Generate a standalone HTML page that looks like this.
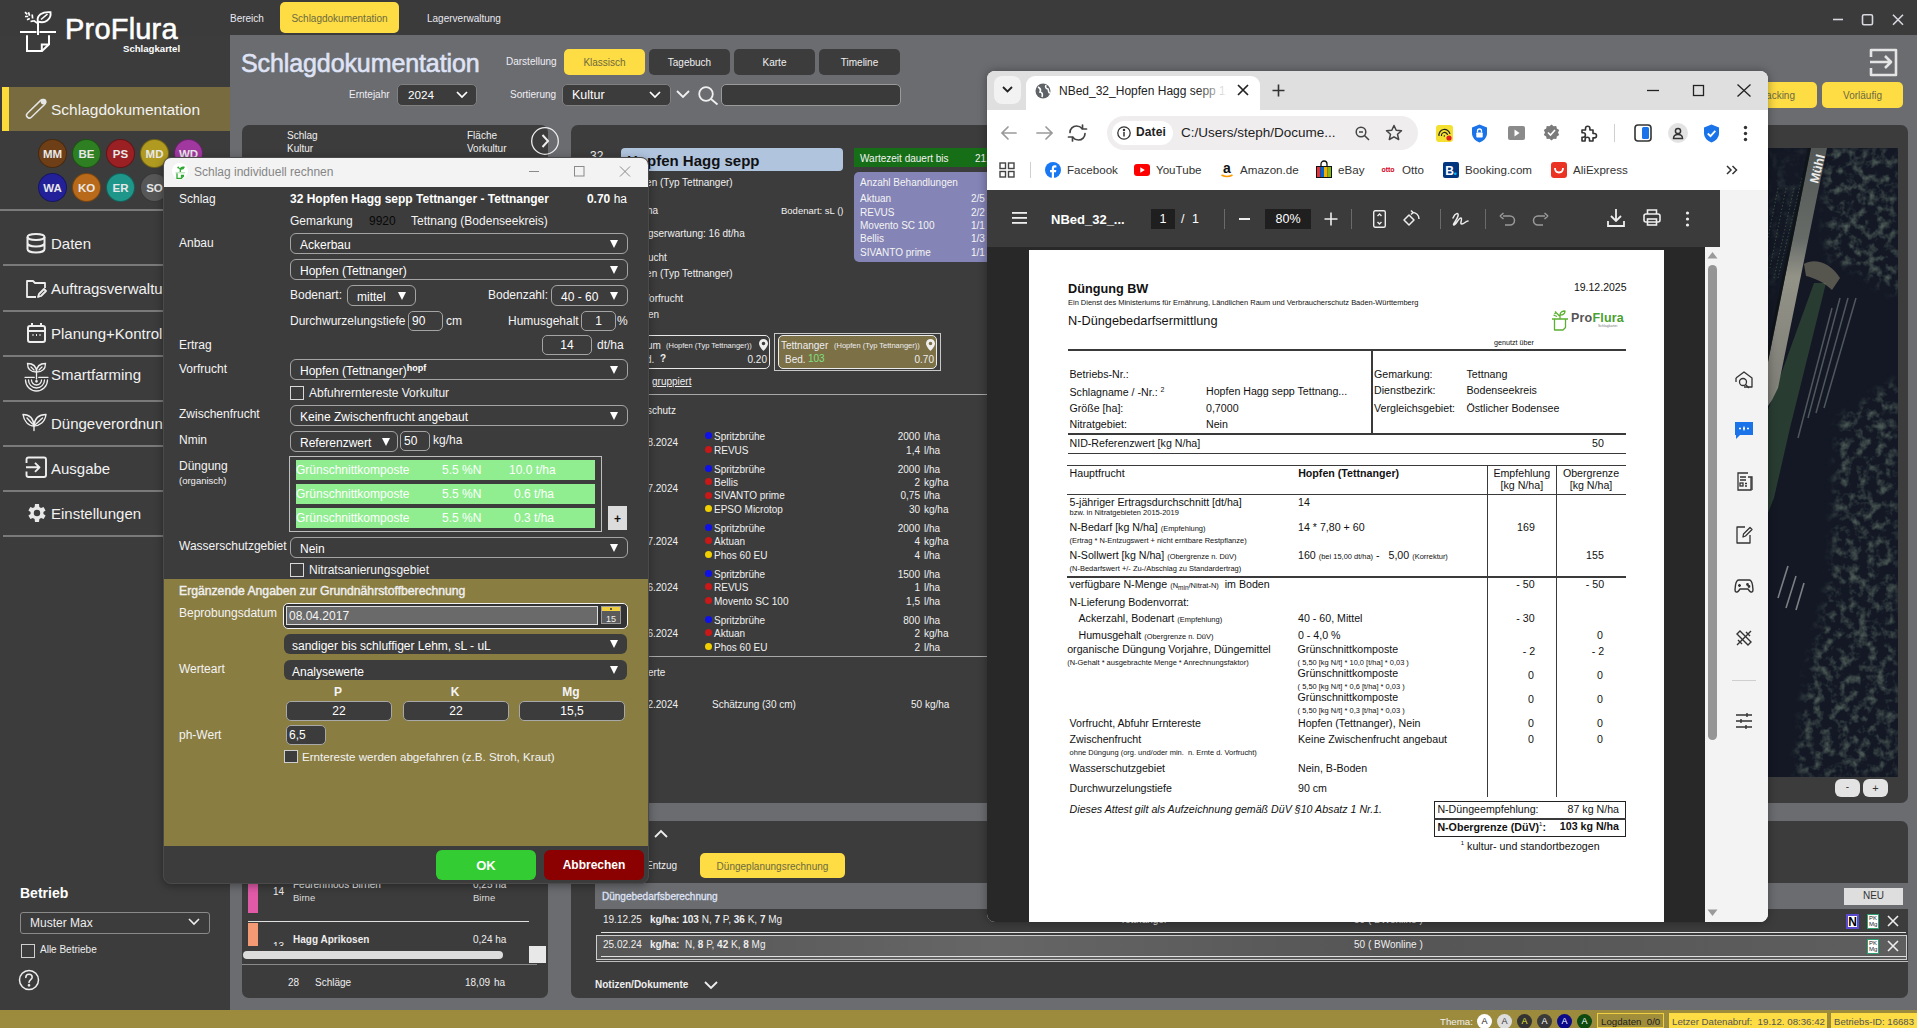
<!DOCTYPE html>
<html><head><meta charset="utf-8">
<style>
*{box-sizing:border-box;margin:0;padding:0}
html,body{width:1917px;height:1028px;overflow:hidden;background:#3c3c3c;font-family:"Liberation Sans",sans-serif;color:#fff}
.a{position:absolute}
.t{position:absolute;white-space:nowrap;line-height:1}
.b{font-weight:bold}
.r{text-align:right}
.c{text-align:center}
svg{position:absolute;overflow:visible}
.sep{position:absolute;left:3px;width:227px;height:1.5px;background:#7a7a7a}
.av{position:absolute;width:29px;height:29px;border-radius:50%;font-size:11.5px;font-weight:bold;line-height:29px;text-align:center;color:#e8e8e8;border:1px solid rgba(0,0,0,.35)}
.mi{position:absolute;left:51px;font-size:15px;line-height:1;white-space:nowrap;color:#f2f2f2}
.btn{position:absolute;border-radius:5px;font-size:10px;line-height:26px;text-align:center;color:#f0f0f0;background:#3c3c3c}
.yb{background:#fddc44;color:#6d6a40}
.dd{position:absolute;border:1px solid #a4a4a4;border-radius:6px;height:21px;font-size:12px;line-height:19px;padding-left:9px;padding-top:1.5px;color:#fff;white-space:nowrap}
.dd i{position:absolute;right:9px;top:5.5px;width:0;height:0;border-left:4.5px solid transparent;border-right:4.5px solid transparent;border-top:8px solid #fff}
.in{position:absolute;border:1px solid #a4a4a4;border-radius:5px;height:20px;font-size:12px;line-height:18px;color:#fff;white-space:nowrap}
.cb{position:absolute;width:14px;height:14px;border:1px solid #d8d8d8}
.lbl{position:absolute;left:14px;font-size:12px;line-height:1;white-space:nowrap;color:#f4f4f4}
.pt{position:absolute;white-space:nowrap;line-height:1;color:#111;font-size:10.6px}
.ps{position:absolute;white-space:nowrap;line-height:1;color:#111;font-size:7.4px}
.pl{position:absolute;background:#3a3a3a}
</style></head><body>
<!-- ===== APP BACKGROUND ===== -->
<div class="a" style="left:0;top:0;width:1917px;height:36px;background:#3b3b3b"></div>
<div class="a" style="left:0;top:36px;width:230px;height:974px;background:#3c3c3c"></div>
<div class="a" style="left:230px;top:35px;width:1687px;height:975px;background:#6b6c70"></div>
<div class="a" style="left:0;top:1010px;width:1917px;height:18px;background:#9c8b3d"></div>

<!-- ===== TOP BAR ===== -->
<svg style="left:0;top:0" width="60" height="60" viewBox="0 0 60 60" fill="none" stroke="#fff" stroke-width="2" stroke-linecap="butt" stroke-linejoin="miter">
  <path d="M20 32H36.5M39.5 32H56"/>
  <path d="M27 35.2V51H42L49 44.3V35.2"/>
  <path d="M41.8 51V44.6H49"/>
  <path d="M38 35V22"/>
  <path d="M37.8 21.5C36.5 15.5 42 11.5 50.5 12.2C51.5 19.5 45 24 37.8 21.5Z" stroke-width="1.9"/>
  <path d="M41 19.5L47.5 14" stroke-width="1.6"/>
  <path d="M25 12.2L27.3 14.3M25 16.5H28.2M27 19.8L29.8 18.5M28.5 12.2L29.6 15.8M32.2 14.5L32.6 18.5M30.5 21.5L33.5 20.8M33.5 20.5L38 23.5" stroke-width="1.7"/>
</svg>
<div class="t" style="left:65px;top:15px;font-size:29px;letter-spacing:0.2px;-webkit-text-stroke:0.55px #fff">ProFlura</div>
<div class="t b" style="left:123px;top:44px;font-size:9.6px">Schlagkartel</div>

<div class="t" style="left:230px;top:14px;font-size:10px;color:#e8e8f0">Bereich</div>
<div class="btn yb" style="left:280px;top:2px;width:119px;height:31px;line-height:33px;border-radius:5px">Schlagdokumentation</div>
<div class="t" style="left:427px;top:14px;font-size:10px;color:#e8e8f0">Lagerverwaltung</div>

<svg style="left:1833px;top:14px" width="80" height="14" fill="none" stroke="#d8d8e0" stroke-width="1.6">
  <path d="M0 5.5H10"/>
  <rect x="29.5" y="0.8" width="10" height="10" rx="1.5"/>
  <path d="M60 0.8L70 10.8M70 0.8L60 10.8"/>
</svg>

<!-- ===== SIDEBAR ===== -->
<div class="a" style="left:2px;top:87px;width:228px;height:44px;background:#776b3f"></div>
<div class="a" style="left:2px;top:87px;width:7px;height:44px;background:#fadb3b"></div>
<svg style="left:22px;top:94px" width="28" height="28" fill="none" stroke="#e6e6e6" stroke-width="1.5">
  <rect x="2" y="12" width="24" height="5.6" rx="2.8" transform="rotate(-44 14 14.8)"/>
  <circle cx="21.6" cy="7.6" r="2.9" fill="#e6e6e6" stroke="none"/>
</svg>
<div class="mi" style="left:51px;top:102px;font-size:15.5px">Schlagdokumentation</div>

<div class="av" style="left:38px;top:139px;background:#6e3f17">MM</div>
<div class="av" style="left:72px;top:139px;background:#2e7f22">BE</div>
<div class="av" style="left:106px;top:139px;background:#9a2024">PS</div>
<div class="av" style="left:140px;top:139px;background:#b09a20">MD</div>
<div class="av" style="left:174px;top:139px;background:#a038a0">WD</div>
<div class="av" style="left:38px;top:173px;background:#23219a">WA</div>
<div class="av" style="left:72px;top:173px;background:#b86a1a">KO</div>
<div class="av" style="left:106px;top:173px;background:#1f968a">ER</div>
<div class="av" style="left:140px;top:173px;background:#575757">SO</div>

<div class="sep" style="left:0;top:209px;width:230px"></div>
<!-- menu -->
<svg style="left:26px;top:233px" width="20" height="20" fill="none" stroke="#eee" stroke-width="2">
  <ellipse cx="10" cy="4" rx="8.5" ry="3"/><path d="M1.5 4V16C1.5 18 5 19.5 10 19.5S18.5 18 18.5 16V4M1.5 10C1.5 12 5 13.5 10 13.5S18.5 12 18.5 10"/>
</svg>
<div class="mi" style="top:236px">Daten</div>
<div class="sep" style="top:264px"></div>
<svg style="left:25px;top:279px" width="22" height="20" fill="none" stroke="#eee" stroke-width="1.8" stroke-linejoin="round">
  <path d="M11 18H2V2H8L10 4H20V9"/><path d="M13 18L14 15L19 10L21 12L16 17Z"/>
</svg>
<div class="mi" style="top:281px">Auftragsverwaltu</div>
<div class="sep" style="top:310px"></div>
<svg style="left:27px;top:323px" width="20" height="20" fill="none" stroke="#eee" stroke-width="2">
  <rect x="1" y="3" width="17" height="16" rx="2"/><path d="M5 0V4M14 0V4M1 8H18"/><path d="M5.5 12H6.5M9 12H10M12.5 12H13.5"/>
</svg>
<div class="mi" style="top:326px">Planung+Kontrol</div>
<div class="sep" style="top:355px"></div>
<svg style="left:24px;top:362px" width="26" height="31" fill="none" stroke="#eee" stroke-width="1.3" stroke-linecap="round">
  <path d="M12.5 10C6.5 10 3.5 6.5 3.5 1.5C9 1.5 12.5 4.5 12.5 10ZM12.5 10C18.5 10 21.5 6.5 21.5 1.5C16 1.5 12.5 4.5 12.5 10Z"/><path d="M7 5L10 8M18 5L15 8"/>
  <path d="M12.5 10V17M1 15.3H10.3M14.7 15.3H24"/>
  <path d="M1.5 18A11 11 0 0 0 23.5 18M4.5 18A8 8 0 0 0 20.5 18M7.5 18A5 5 0 0 0 17.5 18"/><circle cx="12.5" cy="19.3" r=".7" fill="#eee"/>
</svg>
<div class="mi" style="top:367px">Smartfarming</div>
<div class="sep" style="top:400px"></div>
<svg style="left:22px;top:413px" width="26" height="19" fill="none" stroke="#eee" stroke-width="1.4" stroke-linejoin="round" stroke-linecap="round">
  <path d="M12 13C6.5 13 2 8.5 1 1.5C7.5 1.5 11.5 5.5 12 13Z"/><path d="M5 5L10.5 11"/>
  <path d="M12 13C17.5 13 23 9 24 1.5C16.5 1.5 12.5 6 12 13Z"/><path d="M20.5 5L13.5 11.5"/>
  <path d="M12 13V17.5"/>
</svg>
<div class="mi" style="top:416px">Düngeverordnun</div>
<div class="sep" style="top:445px"></div>
<svg style="left:25px;top:456px" width="23" height="23" fill="none" stroke="#eee" stroke-width="1.9" stroke-linejoin="round">
  <path d="M1.5 7V3.5Q1.5 1.5 3.5 1.5H19Q21 1.5 21 3.5V19Q21 21 19 21H3.5Q1.5 21 1.5 19V15.5"/><path d="M1 11.3H14.5M10 6.8L14.5 11.3L10 15.8"/>
</svg>
<div class="mi" style="top:461px">Ausgabe</div>
<div class="sep" style="top:490px"></div>
<svg style="left:24.5px;top:500.5px" width="24" height="24" viewBox="0 0 24 24" fill="#e8e8e8">
  <path d="M19.4 13a7.8 7.8 0 0 0 0-2l2.1-1.6-2-3.5-2.5 1a7.6 7.6 0 0 0-1.7-1L15 3h-4l-.4 2.9a7.6 7.6 0 0 0-1.7 1l-2.5-1-2 3.5L6.6 11a7.8 7.8 0 0 0 0 2l-2.2 1.6 2 3.5 2.5-1a7.6 7.6 0 0 0 1.7 1L11 21h4l.4-2.9a7.6 7.6 0 0 0 1.7-1l2.5 1 2-3.5zM13 15.2a3.2 3.2 0 1 1 0-6.4 3.2 3.2 0 0 1 0 6.4z" transform="translate(-1 0)"/>
</svg>
<div class="mi" style="top:506px">Einstellungen</div>
<div class="sep" style="top:535px"></div>

<div class="t b" style="left:20px;top:886px;font-size:14px">Betrieb</div>
<div class="a" style="left:20px;top:912px;width:190px;height:22px;border:1px solid #8a8a8a;border-radius:3px"></div>
<div class="t" style="left:30px;top:917px;font-size:12px;color:#eee">Muster Max</div>
<svg style="left:188px;top:918px" width="12" height="8" fill="none" stroke="#eee" stroke-width="1.6"><path d="M1 1L6 6L11 1"/></svg>
<div class="a" style="left:21px;top:944px;width:14px;height:14px;border:1px solid #cfcfcf"></div>
<div class="t" style="left:40px;top:945px;font-size:10px;color:#eee">Alle Betriebe</div>
<svg style="left:18px;top:969px" width="22" height="22" fill="none" stroke="#eee" stroke-width="1.5">
  <circle cx="11" cy="11" r="9.5"/><path d="M7.8 8.5C7.8 6.5 9.3 5.3 11 5.3C12.8 5.3 14.2 6.5 14.2 8.2C14.2 10.5 11 10.7 11 13.5" stroke-linecap="round"/><circle cx="11" cy="16.3" r="0.6" fill="#eee"/>
</svg>


<!-- ===== MAIN HEADER ===== -->
<div class="t" style="left:241px;top:51px;font-size:25px;color:#dfe3f6;letter-spacing:-0.1px;-webkit-text-stroke:0.6px #dfe3f6">Schlagdokumentation</div>
<div class="t" style="left:506px;top:57px;font-size:10px;color:#eeeef4">Darstellung</div>
<div class="btn yb" style="left:564px;top:49px;width:81px;height:26px;line-height:28px">Klassisch</div>
<div class="btn" style="left:649px;top:49px;width:81px;height:26px;line-height:28px">Tagebuch</div>
<div class="btn" style="left:734px;top:49px;width:81px;height:26px;line-height:28px">Karte</div>
<div class="btn" style="left:819px;top:49px;width:81px;height:26px;line-height:28px">Timeline</div>
<div class="t" style="left:349px;top:90px;font-size:10px;color:#eeeef4">Erntejahr</div>
<div class="a" style="left:397px;top:84px;width:80px;height:22px;background:#3c3c3c;border-radius:5px;border:1px solid #808080"></div>
<div class="t" style="left:408px;top:89px;font-size:11.7px;color:#fff">2024</div>
<svg style="left:456px;top:91px" width="12" height="8" fill="none" stroke="#fff" stroke-width="1.7"><path d="M1 1L6 6L11 1"/></svg>
<div class="t" style="left:510px;top:90px;font-size:10px;color:#eeeef4">Sortierung</div>
<div class="a" style="left:562px;top:84px;width:109px;height:22px;background:#3c3c3c;border-radius:5px;border:1px solid #808080"></div>
<div class="t" style="left:572px;top:89px;font-size:12.5px;color:#fff">Kultur</div>
<svg style="left:649px;top:91px" width="12" height="8" fill="none" stroke="#fff" stroke-width="1.7"><path d="M1 1L6 6L11 1"/></svg>
<svg style="left:676px;top:90px" width="14" height="9" fill="none" stroke="#f0f0f0" stroke-width="1.8"><path d="M1 1L7 7L13 1"/></svg>
<svg style="left:698px;top:86px" width="21" height="19" fill="none" stroke="#f0f0f0" stroke-width="1.8"><circle cx="8" cy="8" r="6.8"/><path d="M13 13L19.5 18.5"/></svg>
<div class="a" style="left:721px;top:84px;width:180px;height:22px;background:#3a3a3a;border-radius:5px;border:1px solid #9a9a9a"></div>

<svg style="left:1869px;top:48px" width="30" height="29" fill="none" stroke="#e4e4e4" stroke-width="2.6" stroke-linejoin="round">
  <path d="M2 9V2H27V27H2V20"/><path d="M1 14H22M16 8L22 14L16 20"/>
</svg>
<div class="btn yb" style="left:1735px;top:82px;width:82px;height:26px;line-height:28px">Tracking</div>
<div class="btn yb" style="left:1822px;top:82px;width:81px;height:26px;line-height:28px">Vorläufig</div>

<!-- ===== CARDS ===== -->
<div class="a" style="left:242px;top:125px;width:306px;height:873px;background:#3c3c3c;border-radius:7px"></div>
<div class="a" style="left:571px;top:125px;width:1337px;height:678px;background:#3c3c3c;border-radius:7px"></div>
<div class="a" style="left:571px;top:821px;width:1337px;height:177px;background:#3c3c3c;border-radius:7px"></div>

<!-- left card content -->
<div class="t" style="left:287px;top:131px;font-size:10px;color:#f0f0f0">Schlag</div>
<div class="t" style="left:287px;top:144px;font-size:10px;color:#f0f0f0">Kultur</div>
<div class="t" style="left:467px;top:131px;font-size:10px;color:#f0f0f0">Fläche</div>
<div class="t" style="left:467px;top:144px;font-size:10px;color:#f0f0f0">Vorkultur</div>
<svg style="left:531px;top:127px" width="28" height="28" fill="none" stroke="#eee" stroke-width="1.3"><circle cx="14" cy="14" r="13.3"/><path d="M11.5 8L17 14L11.5 20" stroke-width="2"/></svg>

<div class="a" style="left:248px;top:880px;width:10px;height:33px;background:#e05aa8"></div>
<div class="t" style="left:273px;top:887px;font-size:10px;color:#eee">14</div>
<div class="t" style="left:293px;top:880px;font-size:10px;color:#eee">Feurenmoos Birnen</div>
<div class="t" style="left:293px;top:893px;font-size:9.5px;color:#ddd">Birne</div>
<div class="t" style="left:473px;top:880px;font-size:10px;color:#eee">0,25 ha</div>
<div class="t" style="left:473px;top:893px;font-size:9.5px;color:#ddd">Birne</div>
<div class="a" style="left:248px;top:921px;width:281px;height:1px;background:#e0e0e0"></div>
<div class="a" style="left:248px;top:923px;width:10px;height:23px;background:#f39a74"></div>
<div class="a" style="left:242px;top:923px;width:300px;height:23px;overflow:hidden">
  <div class="t" style="left:31px;top:18.5px;font-size:10px;color:#eee">13</div>
</div>
<div class="t b" style="left:293px;top:935px;font-size:10px;color:#eee">Hagg Aprikosen</div>
<div class="t" style="left:473px;top:935px;font-size:10px;color:#eee">0,24 ha</div>
<div class="a" style="left:243px;top:951px;width:260px;height:8px;background:#dcdcdc;border-radius:4px"></div>
<div class="a" style="left:529px;top:946px;width:17px;height:17px;background:#e8e8e8"></div>
<div class="a" style="left:242px;top:964px;width:295px;height:1px;background:#8a8a8a"></div>
<div class="t" style="left:288px;top:978px;font-size:10px;color:#eee">28</div>
<div class="t" style="left:315px;top:978px;font-size:10px;color:#eee">Schläge</div>
<div class="t" style="left:465px;top:978px;font-size:10px;color:#eee">18,09</div>
<div class="t" style="left:494px;top:978px;font-size:10px;color:#eee">ha</div>

<!-- center card content -->
<div class="t" style="left:590px;top:150px;font-size:12px;color:#eee">32</div>
<div class="a" style="left:621px;top:148px;width:222px;height:23px;background:#b0c4de;border-radius:4px"></div>
<div class="t b" style="left:627px;top:153px;font-size:15px;color:#111">Hopfen Hagg sepp</div>
<div class="a" style="left:854px;top:148px;width:140px;height:19px;background:#166e16"></div>
<div class="t" style="left:860px;top:154px;font-size:10px;color:#f4f4f4">Wartezeit dauert bis</div>
<div class="t" style="left:975px;top:154px;font-size:10px;color:#f4f4f4">21.</div>
<div class="a" style="left:854px;top:172px;width:140px;height:90px;background:#8484b6;border-radius:5px"></div>
<div class="t" style="left:860px;top:178px;font-size:10px;color:#f4f4f4">Anzahl Behandlungen</div>
<div class="t" style="left:860px;top:194px;font-size:10px;color:#f4f4f4">Aktuan</div>
<div class="t" style="left:860px;top:208px;font-size:10px;color:#f4f4f4">REVUS</div>
<div class="t" style="left:860px;top:221px;font-size:10px;color:#f4f4f4">Movento SC 100</div>
<div class="t" style="left:860px;top:234px;font-size:10px;color:#f4f4f4">Bellis</div>
<div class="t" style="left:860px;top:248px;font-size:10px;color:#f4f4f4">SIVANTO prime</div>
<div class="t" style="left:971px;top:194px;font-size:10px;color:#f4f4f4">2/5</div>
<div class="t" style="left:971px;top:208px;font-size:10px;color:#f4f4f4">2/2</div>
<div class="t" style="left:971px;top:221px;font-size:10px;color:#f4f4f4">1/1</div>
<div class="t" style="left:971px;top:234px;font-size:10px;color:#f4f4f4">1/3</div>
<div class="t" style="left:971px;top:248px;font-size:10px;color:#f4f4f4">1/1</div>

<div class="t" style="left:625px;top:178px;font-size:10px;color:#f0f0f0">Hopfen (Typ Tettnanger)</div>
<div class="t" style="left:647px;top:206px;font-size:10px;color:#f0f0f0">ha</div>
<div class="t" style="left:781px;top:206px;font-size:9.5px;color:#f0f0f0">Bodenart: sL ()</div>
<div class="t" style="left:648px;top:229px;font-size:10px;color:#f0f0f0">gserwartung: 16 dt/ha</div>
<div class="t" style="left:648px;top:253px;font-size:10px;color:#f0f0f0">ucht</div>
<div class="t" style="left:625px;top:269px;font-size:10px;color:#f0f0f0">Hopfen (Typ Tettnanger)</div>
<div class="t" style="left:643px;top:294px;font-size:10px;color:#f0f0f0">Vorfrucht</div>
<div class="t" style="left:648px;top:310px;font-size:10px;color:#f0f0f0">en</div>

<div class="a" style="left:600px;top:335px;width:170px;height:34px;border:1.5px solid #e8e8e8;border-radius:5px"></div>
<div class="t" style="left:647px;top:341px;font-size:10px;color:#eee">um</div>
<div class="t" style="left:666px;top:342px;font-size:7.5px;color:#eee">(Hopfen (Typ Tettnanger))</div>
<div class="t" style="left:646px;top:355px;font-size:10px;color:#eee">d.</div>
<div class="t b" style="left:660px;top:354px;font-size:10px;color:#eee">?</div>
<div class="t r" style="left:727px;top:355px;width:40px;font-size:10px;color:#eee">0.20</div>
<svg style="left:759px;top:339px" width="9" height="12" fill="#eee"><path d="M4.5 0C2 0 0 2 0 4.5C0 7.5 4.5 12 4.5 12S9 7.5 9 4.5C9 2 7 0 4.5 0ZM4.5 6.3A1.8 1.8 0 1 1 4.5 2.7A1.8 1.8 0 0 1 4.5 6.3Z"/></svg>
<div class="a" style="left:774px;top:333px;width:167px;height:38px;border:1px solid #c8c8c8"></div>
<div class="a" style="left:778px;top:335px;width:159px;height:34px;background:#7c7047;border:1.5px solid #ececec;border-radius:5px"></div>
<div class="t" style="left:781px;top:341px;font-size:10px;color:#eee">Tettnanger</div>
<div class="t" style="left:834px;top:342px;font-size:7.5px;color:#eee">(Hopfen (Typ Tettnanger))</div>
<svg style="left:926px;top:339px" width="9" height="12" fill="#eee"><path d="M4.5 0C2 0 0 2 0 4.5C0 7.5 4.5 12 4.5 12S9 7.5 9 4.5C9 2 7 0 4.5 0ZM4.5 6.3A1.8 1.8 0 1 1 4.5 2.7A1.8 1.8 0 0 1 4.5 6.3Z"/></svg>
<div class="t" style="left:785px;top:355px;font-size:10px;color:#eee">Bed.</div>
<div class="t" style="left:808px;top:354px;font-size:10px;color:#7ee07e">103</div>
<div class="t r" style="left:894px;top:355px;width:40px;font-size:10px;color:#eee">0.70</div>
<div class="t" style="left:652px;top:377px;font-size:10px;color:#eee;text-decoration:underline">gruppiert</div>
<div class="a" style="left:580px;top:394px;width:407px;height:1px;background:#a8a8a8"></div>
<div class="t" style="left:647px;top:406px;font-size:10px;color:#f0f0f0">schutz</div>
<div class="t" style="left:628px;top:438px;font-size:10px;color:#f0f0f0">27.08.2024</div>
<div class="a" style="left:705px;top:432px;width:7px;height:7px;border-radius:50%;background:#1010e8"></div>
<div class="t" style="left:714px;top:432px;font-size:10px;color:#f0f0f0">Spritzbrühe</div>
<div class="t r" style="left:870px;top:432px;width:50px;font-size:10px;color:#f0f0f0">2000</div>
<div class="t" style="left:924px;top:432px;font-size:10px;color:#f0f0f0">l/ha</div>
<div class="a" style="left:705px;top:446px;width:7px;height:7px;border-radius:50%;background:#c81818"></div>
<div class="t" style="left:714px;top:446px;font-size:10px;color:#f0f0f0">REVUS</div>
<div class="t r" style="left:870px;top:446px;width:50px;font-size:10px;color:#f0f0f0">1,4</div>
<div class="t" style="left:924px;top:446px;font-size:10px;color:#f0f0f0">l/ha</div>
<div class="t" style="left:628px;top:484px;font-size:10px;color:#f0f0f0">22.07.2024</div>
<div class="a" style="left:705px;top:465px;width:7px;height:7px;border-radius:50%;background:#1010e8"></div>
<div class="t" style="left:714px;top:465px;font-size:10px;color:#f0f0f0">Spritzbrühe</div>
<div class="t r" style="left:870px;top:465px;width:50px;font-size:10px;color:#f0f0f0">2000</div>
<div class="t" style="left:924px;top:465px;font-size:10px;color:#f0f0f0">l/ha</div>
<div class="a" style="left:705px;top:478px;width:7px;height:7px;border-radius:50%;background:#c81818"></div>
<div class="t" style="left:714px;top:478px;font-size:10px;color:#f0f0f0">Bellis</div>
<div class="t r" style="left:870px;top:478px;width:50px;font-size:10px;color:#f0f0f0">2</div>
<div class="t" style="left:924px;top:478px;font-size:10px;color:#f0f0f0">kg/ha</div>
<div class="a" style="left:705px;top:492px;width:7px;height:7px;border-radius:50%;background:#c81818"></div>
<div class="t" style="left:714px;top:491px;font-size:10px;color:#f0f0f0">SIVANTO prime</div>
<div class="t r" style="left:870px;top:491px;width:50px;font-size:10px;color:#f0f0f0">0,75</div>
<div class="t" style="left:924px;top:491px;font-size:10px;color:#f0f0f0">l/ha</div>
<div class="a" style="left:705px;top:505px;width:7px;height:7px;border-radius:50%;background:#f0d000"></div>
<div class="t" style="left:714px;top:505px;font-size:10px;color:#f0f0f0">EPSO Microtop</div>
<div class="t r" style="left:870px;top:505px;width:50px;font-size:10px;color:#f0f0f0">30</div>
<div class="t" style="left:924px;top:505px;font-size:10px;color:#f0f0f0">kg/ha</div>
<div class="t" style="left:628px;top:537px;font-size:10px;color:#f0f0f0">10.07.2024</div>
<div class="a" style="left:705px;top:524px;width:7px;height:7px;border-radius:50%;background:#1010e8"></div>
<div class="t" style="left:714px;top:524px;font-size:10px;color:#f0f0f0">Spritzbrühe</div>
<div class="t r" style="left:870px;top:524px;width:50px;font-size:10px;color:#f0f0f0">2000</div>
<div class="t" style="left:924px;top:524px;font-size:10px;color:#f0f0f0">l/ha</div>
<div class="a" style="left:705px;top:537px;width:7px;height:7px;border-radius:50%;background:#c81818"></div>
<div class="t" style="left:714px;top:537px;font-size:10px;color:#f0f0f0">Aktuan</div>
<div class="t r" style="left:870px;top:537px;width:50px;font-size:10px;color:#f0f0f0">4</div>
<div class="t" style="left:924px;top:537px;font-size:10px;color:#f0f0f0">kg/ha</div>
<div class="a" style="left:705px;top:551px;width:7px;height:7px;border-radius:50%;background:#f0d000"></div>
<div class="t" style="left:714px;top:551px;font-size:10px;color:#f0f0f0">Phos 60 EU</div>
<div class="t r" style="left:870px;top:551px;width:50px;font-size:10px;color:#f0f0f0">4</div>
<div class="t" style="left:924px;top:551px;font-size:10px;color:#f0f0f0">l/ha</div>
<div class="t" style="left:628px;top:583px;font-size:10px;color:#f0f0f0">24.06.2024</div>
<div class="a" style="left:705px;top:570px;width:7px;height:7px;border-radius:50%;background:#1010e8"></div>
<div class="t" style="left:714px;top:570px;font-size:10px;color:#f0f0f0">Spritzbrühe</div>
<div class="t r" style="left:870px;top:570px;width:50px;font-size:10px;color:#f0f0f0">1500</div>
<div class="t" style="left:924px;top:570px;font-size:10px;color:#f0f0f0">l/ha</div>
<div class="a" style="left:705px;top:583px;width:7px;height:7px;border-radius:50%;background:#c81818"></div>
<div class="t" style="left:714px;top:583px;font-size:10px;color:#f0f0f0">REVUS</div>
<div class="t r" style="left:870px;top:583px;width:50px;font-size:10px;color:#f0f0f0">1</div>
<div class="t" style="left:924px;top:583px;font-size:10px;color:#f0f0f0">l/ha</div>
<div class="a" style="left:705px;top:597px;width:7px;height:7px;border-radius:50%;background:#c81818"></div>
<div class="t" style="left:714px;top:597px;font-size:10px;color:#f0f0f0">Movento SC 100</div>
<div class="t r" style="left:870px;top:597px;width:50px;font-size:10px;color:#f0f0f0">1,5</div>
<div class="t" style="left:924px;top:597px;font-size:10px;color:#f0f0f0">l/ha</div>
<div class="t" style="left:628px;top:629px;font-size:10px;color:#f0f0f0">05.06.2024</div>
<div class="a" style="left:705px;top:616px;width:7px;height:7px;border-radius:50%;background:#1010e8"></div>
<div class="t" style="left:714px;top:616px;font-size:10px;color:#f0f0f0">Spritzbrühe</div>
<div class="t r" style="left:870px;top:616px;width:50px;font-size:10px;color:#f0f0f0">800</div>
<div class="t" style="left:924px;top:616px;font-size:10px;color:#f0f0f0">l/ha</div>
<div class="a" style="left:705px;top:629px;width:7px;height:7px;border-radius:50%;background:#c81818"></div>
<div class="t" style="left:714px;top:629px;font-size:10px;color:#f0f0f0">Aktuan</div>
<div class="t r" style="left:870px;top:629px;width:50px;font-size:10px;color:#f0f0f0">2</div>
<div class="t" style="left:924px;top:629px;font-size:10px;color:#f0f0f0">kg/ha</div>
<div class="a" style="left:705px;top:643px;width:7px;height:7px;border-radius:50%;background:#f0d000"></div>
<div class="t" style="left:714px;top:643px;font-size:10px;color:#f0f0f0">Phos 60 EU</div>
<div class="t r" style="left:870px;top:643px;width:50px;font-size:10px;color:#f0f0f0">2</div>
<div class="t" style="left:924px;top:643px;font-size:10px;color:#f0f0f0">l/ha</div>
<div class="a" style="left:580px;top:656px;width:407px;height:1px;background:#a8a8a8"></div>
<div class="t" style="left:648px;top:668px;font-size:10px;color:#f0f0f0">erte</div>
<div class="t" style="left:628px;top:700px;font-size:10px;color:#f0f0f0">14.02.2024</div>
<div class="t" style="left:712px;top:700px;font-size:10px;color:#f0f0f0">Schätzung (30 cm)</div>
<div class="t" style="left:911px;top:700px;font-size:10px;color:#f0f0f0">50 kg/ha</div>

<!-- map -->
<svg style="left:1768px;top:148px" width="130" height="629" viewBox="0 0 130 629">
  <defs>
    <filter id="nz" x="0" y="0" width="100%" height="100%">
      <feTurbulence type="fractalNoise" baseFrequency="0.11" numOctaves="3" seed="7"/>
      <feGaussianBlur stdDeviation="0.7"/>
      <feColorMatrix type="matrix" values="0 0 0 0 0.24  0 0 0 0 0.34  0 0 0 0 0.25  0 0 0 -2.6 1.45"/>
      <feComposite in2="SourceGraphic" operator="in"/>
    </filter>
    <filter id="bl"><feGaussianBlur stdDeviation="5"/></filter>
    <linearGradient id="rd" x1="0" y1="0" x2="0" y2="1"><stop offset="0" stop-color="#5e625e"/><stop offset=".35" stop-color="#757a74"/><stop offset=".5" stop-color="#aaa899"/><stop offset="1" stop-color="#8f8e84"/></linearGradient>
    <mask id="fm"><g filter="url(#bl)" fill="#fff">
      <path d="M52 0H130V150L90 125L60 110Z" opacity=".85"/>
      <path d="M70 270L130 230V629H25L40 520L62 430Z" opacity=".8"/>
      <path d="M0 0H40L0 170Z" opacity=".25"/>
    </g></mask>
  </defs>
  <rect width="130" height="629" fill="#131824"/>
  <g mask="url(#fm)"><rect width="130" height="629" fill="#fff" filter="url(#nz)" opacity=".6"/></g>
  <g stroke="#4e6e48" stroke-width="1" stroke-dasharray="1.5 2" opacity=".6"><path d="M10 40L0 90M18 40L2 120M26 40L6 130M34 30L10 130"/></g>
  <path d="M0 262L46 135H58L22 280L6 350L0 365Z" fill="#3f6040" opacity=".5"/>
  <path d="M43 0H59L10 240L4 252L0 258V214Z" fill="url(#rd)" opacity=".85"/>
  <path d="M0 214L43 0H40L0 200Z" fill="#0d1210" opacity=".6"/>
  <path d="M36 116C46 110 62 114 72 130L64 142C56 134 46 130 38 128Z" fill="#9a9278" opacity=".5"/>
  <g stroke="#c0ccc4" stroke-width="1.5" opacity=".35">
    <path d="M88 150L56 260"/><path d="M80 150L48 265"/><path d="M72 150L40 270"/><path d="M64 160L30 290"/>
  </g>
  <g stroke="#d0d8d0" stroke-width="1.6" opacity=".55">
    <path d="M20 418L10 450"/><path d="M28 428L18 460"/><path d="M36 435L28 462"/>
  </g>
  <text x="0" y="0" transform="translate(50 36) rotate(-76)" font-family="Liberation Sans" font-weight="bold" font-size="12.5" fill="#ececec">Mühl</text>
</svg>
<div class="a" style="left:1835px;top:779px;width:25px;height:18px;background:#e2e3e2;border-radius:6px"></div>
<div class="t c" style="left:1835px;top:782px;width:25px;font-size:10px;color:#333">-</div>
<div class="a" style="left:1863px;top:779px;width:25px;height:18px;background:#e2e3e2;border-radius:6px"></div>
<div class="t c" style="left:1863px;top:783px;width:25px;font-size:11px;color:#333">+</div>

<!-- bottom card -->
<svg style="left:654px;top:829px" width="14" height="10" fill="none" stroke="#eee" stroke-width="1.8"><path d="M1 8L7 2L13 8"/></svg>
<div class="t" style="left:646px;top:861px;font-size:10px;color:#eee">Entzug</div>
<div class="btn yb" style="left:700px;top:853px;width:145px;height:25px;line-height:27px">Düngeplanungsrechnung</div>
<div class="a" style="left:595px;top:883px;width:1313px;height:26px;background:#6b6c70"></div>
<div class="t" style="left:602px;top:892px;font-size:10px;color:#dfe3f6;-webkit-text-stroke:0.3px #dfe3f6">Düngebedarfsberechnung</div>
<div class="a" style="left:1844px;top:888px;width:59px;height:17px;background:#dedede"></div>
<div class="t c" style="left:1844px;top:891px;width:59px;font-size:10px;color:#333">NEU</div>
<div class="t" style="left:603px;top:915px;font-size:10px;color:#eee">19.12.25</div>
<div class="t" style="left:650px;top:915px;font-size:10px;color:#eee"><span class="b">kg/ha:</span> <b>103</b> N, <b>7</b> P, <b>36</b> K, <b>7</b> Mg</div>
<div class="t" style="left:1120px;top:915px;font-size:10px;color:#ddd">Tettnanger</div>
<div class="t" style="left:1354px;top:915px;font-size:10px;color:#ddd">50 ( BWonline )</div>
<div class="a" style="left:601px;top:932px;width:1305px;height:1px;background:#e0e0e0"></div>
<div class="a" style="left:596px;top:935px;width:1311px;height:25px;background:linear-gradient(90deg,#555 0%,#666 30%,#555 60%,#5e5e5e 100%);border:1px solid #cfcfcf"></div>
<div class="t" style="left:603px;top:940px;font-size:10px;color:#eee">25.02.24</div>
<div class="t" style="left:650px;top:940px;font-size:10px;color:#eee"><span class="b">kg/ha:</span>&nbsp; N, <b>8</b> P, <b>42</b> K, <b>8</b> Mg</div>
<div class="t" style="left:1354px;top:940px;font-size:10px;color:#eee">50 ( BWonline )</div>
<div class="a" style="left:601px;top:956px;width:1305px;height:1px;background:#e0e0e0"></div>
<div class="a" style="left:596px;top:961px;width:1312px;height:1px;background:#bdbdbd"></div>
<div class="a" style="left:1846px;top:914px;width:13px;height:15px;background:#fff;border:2px solid #5a4ad0"></div>
<div class="t b c" style="left:1846px;top:916px;width:13px;font-size:12px;color:#000">N</div>
<div class="a" style="left:1867px;top:914px;width:12px;height:15px;background:#fff;border:1.5px solid #30a070"></div>
<div class="t" style="left:1869px;top:915px;font-size:6px;color:#222;line-height:6px">PK<br>Mg</div>
<svg style="left:1887px;top:915px" width="12" height="12" fill="none" stroke="#eee" stroke-width="1.6"><path d="M1 1L11 11M11 1L1 11"/></svg>
<div class="a" style="left:1867px;top:939px;width:12px;height:15px;background:#fff;border:1.5px solid #30a070"></div>
<div class="t" style="left:1869px;top:940px;font-size:6px;color:#222;line-height:6px">PK<br>Mg</div>
<svg style="left:1887px;top:940px" width="12" height="12" fill="none" stroke="#eee" stroke-width="1.6"><path d="M1 1L11 11M11 1L1 11"/></svg>
<div class="t b" style="left:595px;top:980px;font-size:10px;color:#eee">Notizen/Dokumente</div>
<svg style="left:704px;top:981px" width="14" height="9" fill="none" stroke="#eee" stroke-width="1.8"><path d="M1 1L7 7L13 1"/></svg>

<!-- ===== STATUS BAR ===== -->
<div class="t" style="left:1440px;top:1017px;font-size:9.7px;color:#f0f0f0">Thema:</div>
<div class="av" style="left:1477px;top:1014px;width:15px;height:15px;line-height:15px;font-size:9px;background:#fff;color:#222;font-weight:normal;border:none">A</div>
<div class="av" style="left:1497px;top:1014px;width:15px;height:15px;line-height:15px;font-size:9px;background:#ddd;color:#333;font-weight:normal;border:none">A</div>
<div class="av" style="left:1517px;top:1014px;width:15px;height:15px;line-height:15px;font-size:9px;background:#333;color:#e6e62a;font-weight:normal;border:none">A</div>
<div class="av" style="left:1537px;top:1014px;width:15px;height:15px;line-height:15px;font-size:9px;background:#3a3a3a;color:#fff;font-weight:normal;border:none">A</div>
<div class="av" style="left:1557px;top:1014px;width:15px;height:15px;line-height:15px;font-size:9px;background:#0a0a8a;color:#fff;font-weight:normal;border:none">A</div>
<div class="av" style="left:1577px;top:1014px;width:15px;height:15px;line-height:15px;font-size:9px;background:#0c4a10;color:#fff;font-weight:normal;border:none">A</div>
<div class="a" style="left:1597px;top:1013px;width:67px;height:15px;background:#a08e3a;border:1px solid #f0d040"></div>
<div class="t" style="left:1601px;top:1017px;font-size:9.7px;color:#222">Logdaten&nbsp; 0/0</div>
<div class="a" style="left:1669px;top:1013px;width:158px;height:15px;background:#fddc44"></div>
<div class="t" style="left:1672px;top:1017px;font-size:9.7px;color:#555">Letzer Datenabruf:&nbsp; 19.12. 08:36:42</div>
<div class="a" style="left:1831px;top:1013px;width:86px;height:15px;background:#fddc44"></div>
<div class="t" style="left:1834px;top:1017px;font-size:9.6px;color:#555">Betriebs-ID: 16683</div>

<!-- ===== DIALOG ===== -->
<div class="a" style="left:163px;top:157px;width:486px;height:727px;background:#3c3c3c;border-radius:8px;overflow:hidden;box-shadow:0 2px 8px rgba(0,0,0,.35);border:1px solid #4a4a4a">
  <div class="a" style="left:0;top:0;width:484px;height:29px;background:#f3f3f3"></div>
  <div class="a" style="left:0;top:421px;width:484px;height:267px;background:#8a7d42"></div>
</div>
<svg style="left:171px;top:162px" width="18" height="18" fill="none" stroke="#2ea82e" stroke-width="1.3">
  <circle cx="9" cy="9" r="8" fill="#fff" stroke="none"/>
  <path d="M6 11.2V16.3H10.3L12.8 13.8"/><path d="M10.5 15.5V13.5H13"/>
  <path d="M9.3 10V6.8M9.3 7C10 5.3 11.5 4.8 13 5.2C12.6 6.6 11 7.3 9.3 7Z"/><path d="M6.8 4.8L8.8 6.8M6.5 6L7.5 5" stroke-width="1.1"/>
  <path d="M4.5 10.8H14" stroke="#9bd89b" stroke-width="0.9"/>
</svg>
<div class="t" style="left:194px;top:166px;font-size:12px;color:#858585">Schlag individuell rechnen</div>
<svg style="left:529px;top:166px" width="102" height="11" fill="none" stroke="#8a8a8a" stroke-width="1">
  <path d="M0 5.5H10"/><rect x="45.5" y="0.5" width="9.5" height="9.5"/><path d="M91 0.5L101 10.5M101 0.5L91 10.5"/>
</svg>

<div class="lbl" style="left:179px;top:193px">Schlag</div>
<div class="t b" style="left:290px;top:193px;font-size:12px;color:#fff">32 Hopfen Hagg sepp Tettnanger - Tettnanger</div>
<div class="t b r" style="left:560px;top:193px;width:67px;font-size:12px;color:#fff">0.70 <span style="font-weight:normal">ha</span></div>
<div class="t" style="left:290px;top:215px;font-size:12px;color:#f4f4f4">Gemarkung</div>
<div class="t" style="left:369px;top:215px;font-size:12px;color:#080808">9920</div>
<div class="t" style="left:411px;top:215px;font-size:12px;color:#f4f4f4">Tettnang (Bodenseekreis)</div>

<div class="lbl" style="left:179px;top:237px">Anbau</div>
<div class="dd" style="left:290px;top:233px;width:338px">Ackerbau<i></i></div>
<div class="dd" style="left:290px;top:259px;width:338px">Hopfen (Tettnanger)<i></i></div>
<div class="t" style="left:290px;top:289px;font-size:12px;color:#f4f4f4">Bodenart:</div>
<div class="dd" style="left:347px;top:285px;width:69px">mittel<i></i></div>
<div class="t" style="left:488px;top:289px;font-size:12px;color:#f4f4f4">Bodenzahl:</div>
<div class="dd" style="left:551px;top:285px;width:77px">40 - 60<i></i></div>
<div class="t" style="left:290px;top:315px;font-size:12px;color:#f4f4f4">Durchwurzelungstiefe</div>
<div class="in" style="left:408px;top:311px;width:35px;padding-left:3px">90</div>
<div class="t" style="left:446px;top:315px;font-size:12px;color:#f4f4f4">cm</div>
<div class="t" style="left:508px;top:315px;font-size:12px;color:#f4f4f4">Humusgehalt</div>
<div class="in c" style="left:581px;top:311px;width:35px">1</div>
<div class="t" style="left:617px;top:315px;font-size:12px;color:#f4f4f4">%</div>
<div class="lbl" style="left:179px;top:339px">Ertrag</div>
<div class="in c" style="left:542px;top:335px;width:50px">14</div>
<div class="t" style="left:597px;top:339px;font-size:12px;color:#f4f4f4">dt/ha</div>
<div class="lbl" style="left:179px;top:363px">Vorfrucht</div>
<div class="dd" style="left:290px;top:359px;width:338px">Hopfen (Tettnanger)<span style="font-size:9px;font-weight:bold;position:relative;top:-4px">hopf</span><i></i></div>
<div class="cb" style="left:290px;top:386px"></div>
<div class="t" style="left:309px;top:387px;font-size:12px;color:#f4f4f4">Abfuhrerntereste Vorkultur</div>
<div class="lbl" style="left:179px;top:408px">Zwischenfrucht</div>
<div class="dd" style="left:290px;top:405px;width:338px">Keine Zwischenfrucht angebaut<i></i></div>
<div class="lbl" style="left:179px;top:434px">Nmin</div>
<div class="dd" style="left:290px;top:431px;width:108px">Referenzwert<i style="right:7px"></i></div>
<div class="in" style="left:400px;top:431px;width:30px;padding-left:3px">50</div>
<div class="t" style="left:433px;top:434px;font-size:12px;color:#f4f4f4">kg/ha</div>
<div class="lbl" style="left:179px;top:460px">Düngung</div>
<div class="t" style="left:179px;top:476px;font-size:9.5px;color:#f0f0f0">(organisch)</div>
<div class="a" style="left:289px;top:456px;width:313px;height:76px;border:1px solid #bdbdbd"></div>
<div class="a" style="left:296px;top:460px;width:299px;height:20px;background:#90ee90"></div>
<div class="a" style="left:296px;top:484px;width:299px;height:20px;background:#90ee90"></div>
<div class="a" style="left:296px;top:508px;width:299px;height:20px;background:#90ee90"></div>
<div class="t" style="left:296px;top:464px;font-size:12px;color:#fff">Grünschnittkomposte</div>
<div class="t" style="left:442px;top:464px;font-size:12px;color:#fff">5.5 %N</div>
<div class="t" style="left:509px;top:464px;font-size:12px;color:#fff">10.0 t/ha</div>
<div class="t" style="left:296px;top:488px;font-size:12px;color:#fff">Grünschnittkomposte</div>
<div class="t" style="left:442px;top:488px;font-size:12px;color:#fff">5.5 %N</div>
<div class="t" style="left:514px;top:488px;font-size:12px;color:#fff">0.6 t/ha</div>
<div class="t" style="left:296px;top:512px;font-size:12px;color:#fff">Grünschnittkomposte</div>
<div class="t" style="left:442px;top:512px;font-size:12px;color:#fff">5.5 %N</div>
<div class="t" style="left:514px;top:512px;font-size:12px;color:#fff">0.3 t/ha</div>
<div class="a" style="left:608px;top:506px;width:19px;height:24px;background:#dcdcdc"></div>
<div class="t b c" style="left:608px;top:513px;width:19px;font-size:12px;color:#111">+</div>
<div class="lbl" style="left:179px;top:540px">Wasserschutzgebiet</div>
<div class="dd" style="left:290px;top:537px;width:338px">Nein<i></i></div>
<div class="cb" style="left:290px;top:563px"></div>
<div class="t" style="left:309px;top:564px;font-size:12px;color:#f4f4f4">Nitratsanierungsgebiet</div>

<div class="t" style="left:179px;top:585px;font-size:12.2px;color:#f0f0f0;-webkit-text-stroke:0.4px #f0f0f0">Ergänzende Angaben zur Grundnährstoffberechnung</div>
<div class="lbl" style="left:179px;top:607px">Beprobungsdatum</div>
<div class="a" style="left:283px;top:603px;width:345px;height:26px;border:1.5px solid #f2f2f2;border-radius:5px;background:#333"></div>
<div class="a" style="left:286px;top:606px;width:312px;height:19px;background:#6a6a6a;border:1px solid #dcdcdc"></div>
<div class="t" style="left:289px;top:610px;font-size:12px;color:#f4f4f4">08.04.2017</div>
<svg style="left:601px;top:606px" width="20" height="18">
  <rect x="0.5" y="0.5" width="19" height="17" fill="#5a5a5a" stroke="#9a9a9a"/>
  <rect x="1" y="1" width="18" height="4" fill="#f0d040"/><circle cx="10" cy="3" r="1" fill="#333"/>
  <text x="10" y="15.5" text-anchor="middle" font-family="Liberation Sans" font-size="9" fill="#f0f0f0">15</text>
</svg>
<div class="dd" style="left:284px;top:634px;width:343px;height:20px;border:none;background:#3c3c3c;line-height:20px;padding-left:8px">sandiger bis schluffiger Lehm, sL - uL<i style="top:6px"></i></div>
<div class="lbl" style="left:179px;top:663px">Werteart</div>
<div class="dd" style="left:284px;top:660px;width:343px;height:20px;border:none;background:#3c3c3c;line-height:20px;padding-left:8px">Analysewerte<i style="top:6px"></i></div>
<div class="t b c" style="left:318px;top:686px;width:40px;font-size:12px;color:#f4f4f4">P</div>
<div class="t b c" style="left:435px;top:686px;width:40px;font-size:12px;color:#f4f4f4">K</div>
<div class="t b c" style="left:551px;top:686px;width:40px;font-size:12px;color:#f4f4f4">Mg</div>
<div class="in c" style="left:286px;top:701px;width:106px;background:#3c3c3c;border-color:#a8a8a8">22</div>
<div class="in c" style="left:403px;top:701px;width:106px;background:#3c3c3c;border-color:#a8a8a8">22</div>
<div class="in c" style="left:519px;top:701px;width:106px;background:#3c3c3c;border-color:#a8a8a8">15,5</div>
<div class="lbl" style="left:179px;top:729px">ph-Wert</div>
<div class="in" style="left:286px;top:725px;width:40px;background:#3c3c3c;border-color:#a8a8a8;padding-left:2px">6,5</div>
<div class="a" style="left:284px;top:750px;width:14px;height:13px;background:#3c3c3c;border:1px solid #cfcfcf"></div>
<div class="t" style="left:302px;top:751px;font-size:11.6px;color:#f4f4f4">Erntereste werden abgefahren (z.B. Stroh, Kraut)</div>

<div class="a" style="left:436px;top:850px;width:100px;height:30px;background:#33cc33;border-radius:6px"></div>
<div class="t b c" style="left:436px;top:859px;width:100px;font-size:13px;color:#fff">OK</div>
<div class="a" style="left:544px;top:850px;width:100px;height:30px;background:#8b0000;border-radius:6px"></div>
<div class="t b c" style="left:544px;top:859px;width:100px;font-size:12px;color:#fff">Abbrechen</div>


<!-- ===== BROWSER WINDOW ===== -->
<div class="a" style="left:987px;top:71px;width:781px;height:851px;background:#fff;border-radius:8px;overflow:hidden;box-shadow:0 0 10px rgba(0,0,0,.35)">
  <div class="a" style="left:0;top:0;width:781px;height:39px;background:#dfdfdf"></div>
  <div class="a" style="left:0;top:119px;width:733px;height:57px;background:#3b3b3b"></div>
  <div class="a" style="left:733px;top:119px;width:48px;height:732px;background:#f3f3f3"></div>
  <div class="a" style="left:0;top:176px;width:718px;height:675px;background:#282828"></div>
  <div class="a" style="left:718px;top:176px;width:15px;height:675px;background:#f3f3f3"></div>
  <div class="a" style="left:42px;top:179px;width:635px;height:672px;background:#fff"></div>
</div>
<!-- tabs -->
<div class="a" style="left:994px;top:76px;width:27px;height:28px;background:#f2f2f2;border-radius:8px"></div>
<svg style="left:1002px;top:86px" width="11" height="7" fill="none" stroke="#222" stroke-width="1.8"><path d="M1 1L5.5 5.5L10 1"/></svg>
<div class="a" style="left:1026px;top:76px;width:234px;height:40px;background:#fff;border-radius:9px 9px 0 0"></div>
<svg style="left:1035px;top:83px" width="16" height="16" viewBox="0 0 16 16"><circle cx="8" cy="8" r="7.5" fill="#5f6368"/><path d="M3 4C5 5 6 7 5 9C7 9 8 11 7 14M11 2C10 4 11 6 13 6C14 8 13 10 15 10" fill="none" stroke="#fff" stroke-width="1.6"/></svg>
<div class="a" style="left:1059px;top:83px;width:168px;height:16px;overflow:hidden">
<div class="t" style="left:0;top:2px;font-size:12px;color:#222">NBed_32_Hopfen Hagg sepp 19</div>
<div class="a" style="left:138px;top:0;width:30px;height:16px;background:linear-gradient(90deg,rgba(255,255,255,0),#fff)"></div>
</div>
<svg style="left:1237px;top:84px" width="12" height="12" fill="none" stroke="#222" stroke-width="1.7"><path d="M1 1L11 11M11 1L1 11"/></svg>
<svg style="left:1272px;top:84px" width="13" height="13" fill="none" stroke="#333" stroke-width="1.6"><path d="M6.5 0.5V12.5M0.5 6.5H12.5"/></svg>
<svg style="left:1646px;top:84px" width="108" height="13" fill="none" stroke="#222" stroke-width="1.3"><path d="M1 6.5H13"/><rect x="47.5" y="1.5" width="10" height="10"/><path d="M91.5 0.5L104.5 12.5M104.5 0.5L91.5 12.5"/></svg>
<!-- toolbar -->
<svg style="left:1000px;top:124px" width="100" height="18" fill="none" stroke-width="1.7" stroke-linecap="round">
  <path d="M16 9H2M8 3L2 9L8 15" stroke="#9a9a9a"/>
  <path d="M37 9H52M46 3L52 9L46 15" stroke="#9a9a9a"/>
  <path d="M82 4.5C80.8 3 79 2 76.5 2C72.8 2 70 5 70 8.5M73 13.5C74.2 15 76 16 78.5 16C82.2 16 85 13 85 9.5" stroke="#444"/>
  <path d="M82.5 1V5H86.5M72.5 17V13H68.5" stroke="#444"/>
</svg>
<div class="a" style="left:1107px;top:116px;width:311px;height:34px;background:#efedee;border-radius:17px"></div>
<div class="a" style="left:1112px;top:121px;width:61px;height:24px;background:#fff;border-radius:12px"></div>
<svg style="left:1117px;top:126px" width="14" height="14" fill="none" stroke="#333" stroke-width="1.3"><circle cx="7" cy="7" r="6.2"/><path d="M7 6V10.5" stroke-width="1.5"/><circle cx="7" cy="4" r=".6" fill="#333"/></svg>
<div class="t" style="left:1136px;top:126px;font-size:12px;color:#222;font-weight:bold;letter-spacing:.1px">Datei</div>
<div class="t" style="left:1181px;top:126px;font-size:13.5px;color:#222">C:/Users/steph/Docume...</div>
<svg style="left:1355px;top:126px" width="15" height="15" fill="none" stroke="#444" stroke-width="1.5"><circle cx="6" cy="6" r="4.8"/><path d="M9.5 9.5L14 14M4 6H8"/></svg>
<svg style="left:1385px;top:124px" width="18" height="18" fill="none" stroke="#444" stroke-width="1.5" stroke-linejoin="round"><path d="M9 1.5L11.2 6.3L16.5 6.8L12.5 10.3L13.7 15.5L9 12.8L4.3 15.5L5.5 10.3L1.5 6.8L6.8 6.3Z"/></svg>
<!-- extension icons -->
<div class="a" style="left:1436px;top:125px;width:17px;height:17px;background:#f3e030;border-radius:3px"></div>
<svg style="left:1436px;top:125px" width="17" height="17" fill="none" stroke="#222" stroke-width="1.2"><path d="M3 11A5.5 5.5 0 0 1 14 9M5.5 11A3 3 0 0 1 11.5 10M8 11.5A.8.8 0 0 1 9 11"/><circle cx="13" cy="13" r="2.6" fill="#e02020" stroke="none"/></svg>
<svg style="left:1471px;top:124px" width="17" height="19" viewBox="0 0 17 19"><path d="M8.5 0.5L16 3.5V9C16 13.5 12.8 17 8.5 18.5C4.2 17 1 13.5 1 9V3.5Z" fill="#1a73e8"/><rect x="5.3" y="8.5" width="6.4" height="5" rx=".8" fill="#fff"/><path d="M6.5 8.5V7A2 2 0 0 1 10.5 7V8.5" fill="none" stroke="#fff" stroke-width="1.3"/></svg>
<svg style="left:1508px;top:126px" width="17" height="14"><rect width="17" height="14" rx="2" fill="#8a8a8a"/><path d="M6.5 3.5L11.5 7L6.5 10.5Z" fill="#fff"/></svg>
<svg style="left:1543px;top:124px" width="17" height="17" viewBox="0 0 17 17"><path d="M8.5 0.5L10.6 2.2L13.3 1.9L13.8 4.6L16.2 6L15 8.5L16.2 11L13.8 12.4L13.3 15.1L10.6 14.8L8.5 16.5L6.4 14.8L3.7 15.1L3.2 12.4L0.8 11L2 8.5L0.8 6L3.2 4.6L3.7 1.9L6.4 2.2Z" fill="#7a7a7a"/><path d="M5 8.5L7.5 11L12 6" fill="none" stroke="#fff" stroke-width="1.6"/></svg>
<svg style="left:1580px;top:124px" width="18" height="18" fill="none" stroke="#333" stroke-width="1.6" stroke-linejoin="round"><path d="M2 6H5.5V4.5A2.2 2.2 0 0 1 9.9 4.5V6H13V9.5H14.3A2.2 2.2 0 0 1 14.3 13.9H13V17H9.5V15.5A2.2 2.2 0 0 0 5.1 15.5V17H2V13.2H3.2A2.2 2.2 0 0 0 3.2 8.8H2Z"/></svg>
<div class="a" style="left:1614px;top:124px;width:1px;height:18px;background:#d0d0d0"></div>
<svg style="left:1634px;top:124px" width="18" height="18"><rect x="1" y="1" width="16" height="16" rx="3" fill="#fff" stroke="#333" stroke-width="1.6"/><rect x="8" y="3" width="7" height="12" rx="1.5" fill="#1a73e8"/></svg>
<div class="a" style="left:1668px;top:123px;width:20px;height:20px;background:#e3e3e3;border-radius:50%"></div>
<svg style="left:1672px;top:127px" width="12" height="12" fill="none" stroke="#333" stroke-width="1.5"><circle cx="6" cy="4" r="2.6"/><path d="M1.5 11.5C1.5 8.5 3.5 7.5 6 7.5S10.5 8.5 10.5 11.5Z"/></svg>
<svg style="left:1703px;top:124px" width="17" height="19" viewBox="0 0 17 19"><path d="M8.5 0.5L16 3.5V9C16 13.5 12.8 17 8.5 18.5C4.2 17 1 13.5 1 9V3.5Z" fill="#1a73e8"/><path d="M4.8 9.5L7.5 12.2L12.3 6.8" fill="none" stroke="#fff" stroke-width="1.8"/></svg>
<svg style="left:1743px;top:125px" width="5" height="17" fill="#333"><circle cx="2.5" cy="2.5" r="1.7"/><circle cx="2.5" cy="8.5" r="1.7"/><circle cx="2.5" cy="14.5" r="1.7"/></svg>
<!-- bookmarks -->
<svg style="left:999px;top:162px" width="16" height="16" fill="none" stroke="#444" stroke-width="1.4"><rect x="1" y="1" width="5.5" height="5.5"/><rect x="9.5" y="1" width="5.5" height="5.5"/><rect x="1" y="9.5" width="5.5" height="5.5"/><rect x="9.5" y="9.5" width="5.5" height="5.5"/></svg>
<div class="a" style="left:1030px;top:162px;width:1px;height:16px;background:#d0d0d0"></div>
<svg style="left:1045px;top:162px" width="16" height="16" viewBox="0 0 16 16"><circle cx="8" cy="8" r="8" fill="#1877f2"/><path d="M9 16V10.3H11L11.3 8H9V6.6C9 6 9.3 5.5 10.2 5.5H11.4V3.5C11 3.4 10.3 3.3 9.6 3.3C8 3.3 6.8 4.3 6.8 6.2V8H5V10.3H6.8V16Z" fill="#fff"/></svg>
<div class="t" style="left:1067px;top:164px;font-size:11.6px;color:#333">Facebook</div>
<svg style="left:1134px;top:164px" width="16" height="12"><rect width="16" height="12" rx="3" fill="#f00"/><path d="M6.3 3.3L10.8 6L6.3 8.7Z" fill="#fff"/></svg>
<div class="t" style="left:1156px;top:164px;font-size:11.6px;color:#333">YouTube</div>
<svg style="left:1220px;top:161px" width="14" height="18" viewBox="0 0 14 18"><text x="7" y="12" text-anchor="middle" font-family="Liberation Sans" font-weight="bold" font-size="14" fill="#111">a</text><path d="M1.5 14C5 16 9 16 12.5 14" fill="none" stroke="#f90" stroke-width="1.5"/></svg>
<div class="t" style="left:1240px;top:164px;font-size:11.6px;color:#333">Amazon.de</div>
<svg style="left:1316px;top:161px" width="16" height="17" viewBox="0 0 16 17"><path d="M5 5V3A3 3 0 0 1 11 3V5" fill="none" stroke="#111" stroke-width="1.3"/><rect x="0" y="5" width="16" height="12" fill="#111"/><rect x="1" y="6" width="3.5" height="10" fill="#e53238"/><rect x="4.5" y="6" width="3.5" height="10" fill="#0064d2"/><rect x="8" y="6" width="3.5" height="10" fill="#f5af02"/><rect x="11.5" y="6" width="3.5" height="10" fill="#86b817"/></svg>
<div class="t" style="left:1338px;top:164px;font-size:11.6px;color:#333">eBay</div>
<svg style="left:1380px;top:165px" width="16" height="8"><text x="8" y="7" text-anchor="middle" font-family="Liberation Sans" font-weight="bold" font-size="7" fill="#d4001a">otto</text></svg>
<div class="t" style="left:1402px;top:164px;font-size:11.6px;color:#333">Otto</div>
<svg style="left:1443px;top:162px" width="16" height="16"><rect width="16" height="16" rx="2" fill="#003580"/><text x="6.5" y="13" text-anchor="middle" font-family="Liberation Sans" font-weight="bold" font-size="12" fill="#fff">B</text><circle cx="12.3" cy="11.8" r="1.3" fill="#00bfff"/></svg>
<div class="t" style="left:1465px;top:164px;font-size:11.6px;color:#333">Booking.com</div>
<svg style="left:1551px;top:162px" width="16" height="16"><rect width="16" height="16" rx="3" fill="#ea3323"/><path d="M4 6C4 12 12 12 12 6" fill="none" stroke="#fff" stroke-width="1.8"/></svg>
<div class="t" style="left:1573px;top:164px;font-size:11.6px;color:#333">AliExpress</div>
<svg style="left:1726px;top:165px" width="12" height="10" fill="none" stroke="#333" stroke-width="1.5"><path d="M1 1L5 5L1 9M6.5 1L10.5 5L6.5 9"/></svg>
<!-- pdf toolbar -->
<svg style="left:1012px;top:212px" width="15" height="12" fill="#eee"><rect y="0" width="15" height="1.8"/><rect y="5" width="15" height="1.8"/><rect y="10" width="15" height="1.8"/></svg>
<div class="t b" style="left:1051px;top:213px;font-size:13px;color:#fff">NBed_32_...</div>
<div class="a" style="left:1151px;top:209px;width:24px;height:20px;background:#1f1f1f"></div>
<div class="t c" style="left:1151px;top:213px;width:24px;font-size:12.5px;color:#fff">1</div>
<div class="t" style="left:1181px;top:213px;font-size:12.5px;color:#fff">/</div>
<div class="t" style="left:1192px;top:213px;font-size:12.5px;color:#fff">1</div>
<div class="a" style="left:1224px;top:209px;width:1px;height:20px;background:#6a6a6a"></div>
<div class="a" style="left:1239px;top:218px;width:11px;height:1.6px;background:#eee"></div>
<div class="a" style="left:1265px;top:209px;width:46px;height:20px;background:#1f1f1f"></div>
<div class="t c" style="left:1265px;top:213px;width:46px;font-size:12.5px;color:#fff">80%</div>
<svg style="left:1324px;top:212px" width="14" height="14" fill="none" stroke="#eee" stroke-width="1.6"><path d="M7 0.5V13.5M0.5 7H13.5"/></svg>
<div class="a" style="left:1351px;top:209px;width:1px;height:20px;background:#6a6a6a"></div>
<svg style="left:1373px;top:210px" width="13" height="18" fill="none" stroke="#eee" stroke-width="1.4"><rect x="0.7" y="0.7" width="11.6" height="16.6" rx="1.5"/><path d="M4.5 6L6.5 4L8.5 6M4.5 12L6.5 14L8.5 12"/></svg>
<svg style="left:1402px;top:209px" width="19" height="19" fill="none" stroke="#eee" stroke-width="1.5" stroke-linejoin="round"><path d="M2 11L7 6L12 11L7 16Z"/><path d="M10 3.5C14 3.5 17 6 17 10"/><path d="M9 1.5L11 3.5L9 5.5"/></svg>
<div class="a" style="left:1440px;top:209px;width:1px;height:20px;background:#6a6a6a"></div>
<svg style="left:1450px;top:210px" width="24" height="18" fill="none" stroke="#eee" stroke-width="1.5" stroke-linecap="round"><path d="M3 8C5 3 9 2 8 6C7 10 2 15 4 15C6 15 9 7 11 8C13 9 9 14 12 14C14 14 16 11 18 11"/></svg>
<div class="a" style="left:1485px;top:209px;width:1px;height:20px;background:#6a6a6a"></div>
<svg style="left:1499px;top:212px" width="50" height="14" fill="none" stroke="#9a9a9a" stroke-width="1.5"><path d="M4 4H11A4.5 4.5 0 0 1 11 13H6M1 4L4.5 1M1 4L4.5 7"/><path d="M46 4H39A4.5 4.5 0 0 0 39 13H44M49 4L45.5 1M49 4L45.5 7"/></svg>
<svg style="left:1607px;top:208px" width="18" height="20" fill="none" stroke="#eee" stroke-width="1.8"><path d="M9 1V13M4 8L9 13L14 8M1 13V18H17V13"/></svg>
<svg style="left:1643px;top:209px" width="18" height="17" fill="none" stroke="#eee" stroke-width="1.6"><path d="M4.5 5V1H13.5V5"/><rect x="1" y="5" width="16" height="8" rx="2"/><rect x="4.5" y="10" width="9" height="6"/></svg>
<svg style="left:1685px;top:211px" width="5" height="16" fill="#eee"><circle cx="2.5" cy="2" r="1.6"/><circle cx="2.5" cy="8" r="1.6"/><circle cx="2.5" cy="14" r="1.6"/></svg>
<!-- pdf scrollbar -->
<svg style="left:1707px;top:251px" width="11" height="8"><path d="M0.5 7.5L5.5 1L10.5 7.5Z" fill="#9a9a9a"/></svg>
<div class="a" style="left:1708px;top:265px;width:9px;height:475px;background:#959595;border-radius:4.5px"></div>
<svg style="left:1707px;top:909px" width="11" height="8"><path d="M0.5 0.5L5.5 7L10.5 0.5Z" fill="#9a9a9a"/></svg>
<!-- pdf sidebar icons -->
<svg style="left:1734px;top:370px" width="20" height="20" fill="none" stroke="#333" stroke-width="1.3" stroke-linejoin="round"><path d="M2 8L10 2L18 8V17H10"/><path d="M2 8V12"/><circle cx="9" cy="12" r="3.5"/><path d="M11.5 14.5L15 18"/></svg>
<svg style="left:1734px;top:421px" width="20" height="19"><path d="M1 1H19V14H6L2 18V14H1Z" fill="#1a73e8"/><path d="M5 7.5H7M9 7.5H11M13 7.5H15M10 5.5V9.5" stroke="#fff" stroke-width="1.3"/></svg>
<svg style="left:1735px;top:472px" width="18" height="20" fill="none" stroke="#333" stroke-width="1.3"><path d="M13 1H3V18H16V5"/><path d="M13 5H17V18"/><path d="M5 5H11M5 8H11"/><rect x="5" y="11" width="3" height="3"/><path d="M10 11.5H12M10 14H12"/></svg>
<svg style="left:1735px;top:525px" width="18" height="20" fill="none" stroke="#333" stroke-width="1.3" stroke-linejoin="round"><path d="M10 2H2V18H15V10"/><path d="M8 12L8.5 9L15 2.5L17 4.5L10.5 11Z"/></svg>
<svg style="left:1734px;top:578px" width="20" height="16" fill="none" stroke="#333" stroke-width="1.4" stroke-linejoin="round"><path d="M5 2H15C17 2 18 4 18.5 7L19 12C19 14 17 15 15.5 13L14 11H6L4.5 13C3 15 1 14 1 12L1.5 7C2 4 3 2 5 2Z"/><path d="M5.5 6V9M4 7.5H7"/><circle cx="13.5" cy="6.5" r=".7" fill="#333"/><circle cx="15" cy="8.5" r=".7" fill="#333"/></svg>
<svg style="left:1735px;top:629px" width="18" height="18" fill="none" stroke="#333" stroke-width="1.4"><path d="M2 5L13 16L16 13L5 2Z"/><path d="M16 2L2 16M11 3L15 7M3 11L7 15"/></svg>
<div class="a" style="left:1732px;top:680px;width:24px;height:1px;background:#cfcfcf"></div>
<svg style="left:1735px;top:712px" width="18" height="18" fill="none" stroke="#333" stroke-width="1.4"><path d="M1 3H17M1 9H17M1 15H17"/><path d="M12 1V5M6 7V11M11 13V17"/></svg>
<div class="pt" style="left:1068px;top:283.0px;font-size:12.7px;font-weight:bold">Düngung BW</div>
<div class="pt r" style="left:1426.5px;width:200px;top:281.8px;font-size:10.5px;">19.12.2025</div>
<div class="pt" style="left:1068px;top:298.9px;font-size:7.47px;">Ein Dienst des Ministeriums für Ernährung, Ländlichen Raum und Verbraucherschutz Baden-Württemberg</div>
<div class="pt" style="left:1068px;top:315.2px;font-size:12.75px;">N-Düngebedarfsermittlung</div>
<svg style="left:1551px;top:310px" width="18" height="21" fill="none" stroke="#5cb030" stroke-width="1.3" stroke-linejoin="round"><path d="M1 9H17M3.5 9V20H12L14.5 17.5V9M9 9V5C9 2.5 11 1 14 1C14 3.5 12.5 5 9 5M8.5 6L4 1.5M3.5 4L5.5 2M6 6.5L2.5 5"/></svg>
<div class="pt b" style="left:1571px;top:312px;font-size:12.5px;color:#555;letter-spacing:.2px">Pro<span style="color:#4aa030">Flura</span></div>
<div class="pt" style="left:1598px;top:325px;font-size:3.5px;color:#777">Schlagkartei</div>
<div class="pt" style="left:1494px;top:340.0px;font-size:7.17px;">genutzt über</div>
<div class="pl" style="left:1068px;top:349.4px;width:558px;height:1.5px"></div>
<div class="pl" style="left:1371.2px;top:350px;width:1.5px;height:84px"></div>
<div class="pt" style="left:1069.5px;top:368.9px;font-size:10.65px;">Betriebs-Nr.:</div>
<div class="pt" style="left:1069.5px;top:386.7px;font-size:10.65px;">Schlagname / -Nr.: <span style="font-size:7px;position:relative;top:-4px">2</span></div>
<div class="pt" style="left:1206px;top:386.0px;font-size:10.65px;">Hopfen Hagg sepp Tettnang...</div>
<div class="pt" style="left:1069.5px;top:403.1px;font-size:10.65px;">Größe [ha]:</div>
<div class="pt" style="left:1206px;top:403.1px;font-size:10.65px;">0,7000</div>
<div class="pt" style="left:1069.5px;top:418.9px;font-size:10.65px;">Nitratgebiet:</div>
<div class="pt" style="left:1206px;top:418.9px;font-size:10.65px;">Nein</div>
<div class="pt" style="left:1374px;top:368.9px;font-size:10.65px;">Gemarkung:</div>
<div class="pt" style="left:1466.5px;top:368.9px;font-size:10.65px;">Tettnang</div>
<div class="pt" style="left:1374px;top:385.0px;font-size:10.65px;">Dienstbezirk:</div>
<div class="pt" style="left:1466.5px;top:385.0px;font-size:10.65px;">Bodenseekreis</div>
<div class="pt" style="left:1374px;top:403.1px;font-size:10.65px;">Vergleichsgebiet:</div>
<div class="pt" style="left:1466.5px;top:403.1px;font-size:10.65px;">Östlicher Bodensee</div>
<div class="pl" style="left:1068px;top:433.2px;width:558px;height:1.5px"></div>
<div class="pt" style="left:1069.5px;top:437.9px;font-size:10.65px;">NID-Referenzwert [kg N/ha]</div>
<div class="pt" style="left:1592px;top:437.9px;font-size:10.65px;">50</div>
<div class="pl" style="left:1068px;top:452.9px;width:558px;height:1.5px"></div>
<div class="pl" style="left:1067px;top:464.9px;width:559px;height:1.5px"></div>
<div class="pt" style="left:1069.6px;top:468.0px;font-size:10.65px;">Hauptfrucht</div>
<div class="pt" style="left:1298.2px;top:468.0px;font-size:10.65px;font-weight:bold">Hopfen (Tettnanger)</div>
<div class="pt c" style="left:1421.8px;width:200px;top:468.0px;font-size:10.65px;">Empfehlung</div>
<div class="pt c" style="left:1421.8px;width:200px;top:480.2px;font-size:10.65px;">[kg N/ha]</div>
<div class="pt c" style="left:1491px;width:200px;top:468.0px;font-size:10.65px;">Obergrenze</div>
<div class="pt c" style="left:1491px;width:200px;top:480.2px;font-size:10.65px;">[kg N/ha]</div>
<div class="pl" style="left:1486.7px;top:465.7px;width:1.5px;height:331.3px"></div>
<div class="pl" style="left:1555.7px;top:465.7px;width:1.5px;height:331.3px"></div>
<div class="pl" style="left:1067px;top:493.9px;width:559px;height:1.5px"></div>
<div class="pt" style="left:1069.6px;top:497.0px;font-size:10.65px;">5-jähriger Ertragsdurchschnitt [dt/ha]</div>
<div class="pt" style="left:1298px;top:497.0px;font-size:10.65px;">14</div>
<div class="pt" style="left:1069.6px;top:509.3px;font-size:7.47px;">bzw. in Nitratgebieten 2015-2019</div>
<div class="pt" style="left:1069.6px;top:522.0px;font-size:10.65px;">N-Bedarf [kg N/ha] <span style="font-size:7.47px">(Empfehlung)</span></div>
<div class="pt" style="left:1298px;top:522.0px;font-size:10.65px;">14 * 7,80 + 60</div>
<div class="pt c" style="left:1426px;width:200px;top:522.0px;font-size:10.65px;">169</div>
<div class="pt" style="left:1069.6px;top:536.7px;font-size:7.47px;">(Ertrag * N-Entzugswert + nicht erntbare Restpflanze)</div>
<div class="pt" style="left:1069.6px;top:550.1px;font-size:10.65px;">N-Sollwert [kg N/ha] <span style="font-size:7.47px">(Obergrenze n. DüV)</span></div>
<div class="pt" style="left:1298px;top:550.1px;font-size:10.65px;">160 <span style="font-size:7.47px">(bei 15,00 dt/ha)</span> -&nbsp;&nbsp; 5,00 <span style="font-size:7.47px">(Korrektur)</span></div>
<div class="pt c" style="left:1495px;width:200px;top:550.1px;font-size:10.65px;">155</div>
<div class="pt" style="left:1069.6px;top:564.8px;font-size:7.47px;">(N-Bedarfswert +/- Zu-/Abschlag zu Standardertrag)</div>
<div class="pl" style="left:1067px;top:576.2px;width:559px;height:1.5px"></div>
<div class="pt" style="left:1069.6px;top:579.4px;font-size:10.65px;">verfügbare N-Menge <span style="font-size:7.47px">(N<sub style="font-size:6.5px">min</sub>/Nitrat-N)</span>&nbsp; im Boden</div>
<div class="pt c" style="left:1425.5px;width:200px;top:579.4px;font-size:10.65px;">- 50</div>
<div class="pt c" style="left:1495px;width:200px;top:579.4px;font-size:10.65px;">- 50</div>
<div class="pt" style="left:1069.6px;top:597.1px;font-size:10.65px;">N-Lieferung Bodenvorrat:</div>
<div class="pt" style="left:1078.5px;top:613.0px;font-size:10.65px;">Ackerzahl, Bodenart <span style="font-size:7.47px">(Empfehlung)</span></div>
<div class="pt" style="left:1298px;top:613.0px;font-size:10.65px;">40 - 60, Mittel</div>
<div class="pt c" style="left:1425.5px;width:200px;top:613.0px;font-size:10.65px;">- 30</div>
<div class="pt" style="left:1078.5px;top:630.2px;font-size:10.65px;">Humusgehalt <span style="font-size:7.47px">(Obergrenze n. DüV)</span></div>
<div class="pt" style="left:1298px;top:630.2px;font-size:10.65px;">0 - 4,0 %</div>
<div class="pt c" style="left:1500px;width:200px;top:630.2px;font-size:10.65px;">0</div>
<div class="pt" style="left:1067.2px;top:644.1px;font-size:10.65px;">organische Düngung Vorjahre, Düngemittel</div>
<div class="pt" style="left:1297.6px;top:644.1px;font-size:10.65px;">Grünschnittkomposte</div>
<div class="pt c" style="left:1429px;width:200px;top:646.2px;font-size:10.65px;">- 2</div>
<div class="pt c" style="left:1498px;width:200px;top:646.2px;font-size:10.65px;">- 2</div>
<div class="pt" style="left:1067.2px;top:658.8px;font-size:7.47px;">(N-Gehalt * ausgebrachte Menge * Anrechnungsfaktor)</div>
<div class="pt" style="left:1297.6px;top:658.8px;font-size:7.47px;">( 5,50 [kg N/t] * 10,0 [t/ha] * 0,03 )</div>
<div class="pt" style="left:1297.6px;top:667.9px;font-size:10.65px;">Grünschnittkomposte</div>
<div class="pt c" style="left:1431px;width:200px;top:670.0px;font-size:10.65px;">0</div>
<div class="pt c" style="left:1500px;width:200px;top:670.0px;font-size:10.65px;">0</div>
<div class="pt" style="left:1297.6px;top:682.6px;font-size:7.47px;">( 5,50 [kg N/t] * 0,6 [t/ha] * 0,03 )</div>
<div class="pt" style="left:1297.6px;top:692.0px;font-size:10.65px;">Grünschnittkomposte</div>
<div class="pt c" style="left:1431px;width:200px;top:694.2px;font-size:10.65px;">0</div>
<div class="pt c" style="left:1500px;width:200px;top:694.2px;font-size:10.65px;">0</div>
<div class="pt" style="left:1297.6px;top:706.7px;font-size:7.47px;">( 5,50 [kg N/t] * 0,3 [t/ha] * 0,03 )</div>
<div class="pt" style="left:1069.6px;top:718.0px;font-size:10.65px;">Vorfrucht, Abfuhr Erntereste</div>
<div class="pt" style="left:1298px;top:718.0px;font-size:10.65px;">Hopfen (Tettnanger), Nein</div>
<div class="pt c" style="left:1431px;width:200px;top:718.0px;font-size:10.65px;">0</div>
<div class="pt c" style="left:1500px;width:200px;top:718.0px;font-size:10.65px;">0</div>
<div class="pt" style="left:1069.6px;top:733.8px;font-size:10.65px;">Zwischenfrucht</div>
<div class="pt" style="left:1298px;top:733.8px;font-size:10.65px;">Keine Zwischenfrucht angebaut</div>
<div class="pt c" style="left:1431px;width:200px;top:733.8px;font-size:10.65px;">0</div>
<div class="pt c" style="left:1500px;width:200px;top:733.8px;font-size:10.65px;">0</div>
<div class="pt" style="left:1069.6px;top:748.6px;font-size:7.47px;">ohne Düngung (org. und/oder min.&nbsp; n. Ernte d. Vorfrucht)</div>
<div class="pt" style="left:1069.6px;top:763.1px;font-size:10.65px;">Wasserschutzgebiet</div>
<div class="pt" style="left:1298px;top:763.1px;font-size:10.65px;">Nein, B-Boden</div>
<div class="pt" style="left:1069.6px;top:783.0px;font-size:10.65px;">Durchwurzelungstiefe</div>
<div class="pt" style="left:1298px;top:783.0px;font-size:10.65px;">90 cm</div>
<div class="pt" style="left:1069.6px;top:804.3px;font-size:10.65px;font-style:italic">Dieses Attest gilt als Aufzeichnung gemäß DüV §10 Absatz 1 Nr.1.</div>
<div class="a" style="left:1434px;top:801px;width:192px;height:36px;border:1.5px solid #222"></div>
<div class="pl" style="left:1434px;top:818.0px;width:192px;height:1.5px"></div>
<div class="pt" style="left:1437.4px;top:804.3px;font-size:10.65px;">N-Düngeempfehlung:</div>
<div class="pt r" style="left:1419px;width:200px;top:804.3px;font-size:10.65px;">87 kg N/ha</div>
<div class="pt" style="left:1437.4px;top:821.1px;font-size:10.65px;font-weight:bold">N-Obergrenze (DüV)<sup style="font-size:6px;font-weight:normal">1</sup>:</div>
<div class="pt r" style="left:1419px;width:200px;top:821.1px;font-size:10.65px;font-weight:bold">103 kg N/ha</div>
<div class="pt" style="left:1460.8px;top:840.0px;font-size:10.65px;"><sup style="font-size:6px">1</sup> kultur- und standortbezogen</div>


</body></html>
